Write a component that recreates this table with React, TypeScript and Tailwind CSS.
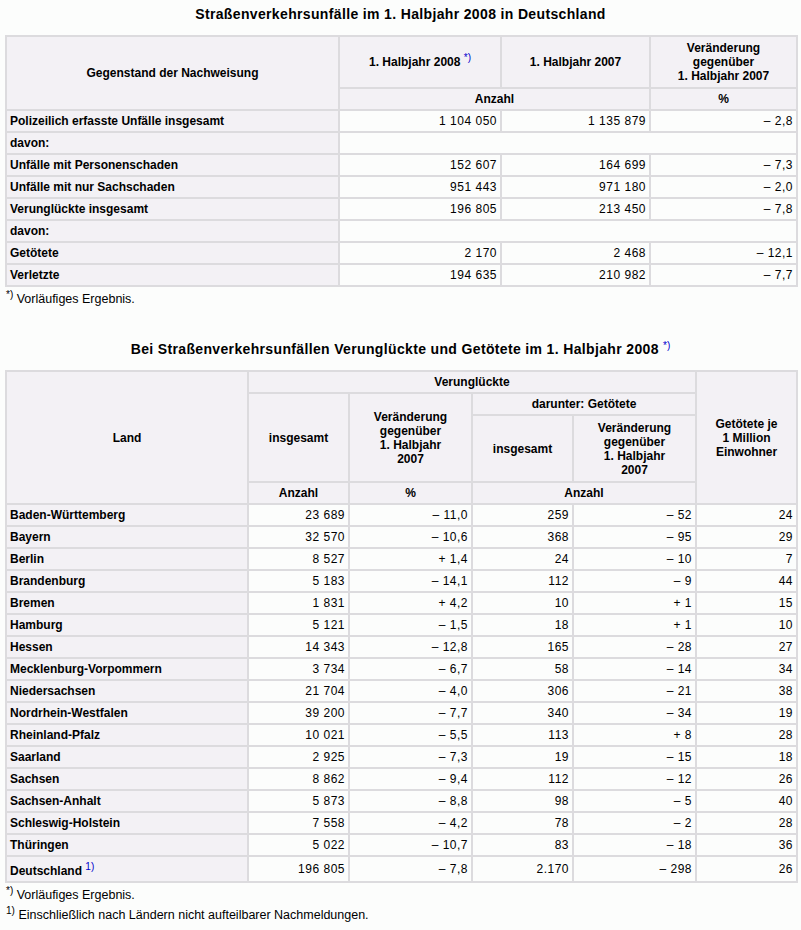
import React from "react";

const font = { fontFamily: '"Liberation Sans", Arial, sans-serif' };

const th = "border-2 border-[#dcdbde] bg-[#f3f1f5] font-bold text-center align-middle px-[3px]";
const lab = "border-2 border-[#dcdbde] bg-[#f3f1f5] font-bold text-left px-[3px] h-[22px]";
const num = "border-2 border-[#dcdbde] text-right px-[3px] h-[22px] tracking-[0.5px]";

const Sup = ({ children, blue = true }: { children: React.ReactNode; blue?: boolean }) => (
  <sup className={`text-[10px] font-normal tracking-normal ${blue ? "text-[#0000cc]" : "text-black"}`}>{children}</sup>
);

const table1: (string | null)[][] = [
  ["Polizeilich erfasste Unfälle insgesamt", "1 104 050", "1 135 879", "– 2,8"],
  ["davon:", null],
  ["Unfälle mit Personenschaden", "152 607", "164 699", "– 7,3"],
  ["Unfälle mit nur Sachschaden", "951 443", "971 180", "– 2,0"],
  ["Verunglückte insgesamt", "196 805", "213 450", "– 7,8"],
  ["davon:", null],
  ["Getötete", "2 170", "2 468", "– 12,1"],
  ["Verletzte", "194 635", "210 982", "– 7,7"],
];

const laender = [
  ["Baden-Württemberg", "23 689", "– 11,0", "259", "– 52", "24"],
  ["Bayern", "32 570", "– 10,6", "368", "– 95", "29"],
  ["Berlin", "8 527", "+ 1,4", "24", "– 10", "7"],
  ["Brandenburg", "5 183", "– 14,1", "112", "– 9", "44"],
  ["Bremen", "1 831", "+ 4,2", "10", "+ 1", "15"],
  ["Hamburg", "5 121", "– 1,5", "18", "+ 1", "10"],
  ["Hessen", "14 343", "– 12,8", "165", "– 28", "27"],
  ["Mecklenburg-Vorpommern", "3 734", "– 6,7", "58", "– 14", "34"],
  ["Niedersachsen", "21 704", "– 4,0", "306", "– 21", "38"],
  ["Nordrhein-Westfalen", "39 200", "– 7,7", "340", "– 34", "19"],
  ["Rheinland-Pfalz", "10 021", "– 5,5", "113", "+ 8", "28"],
  ["Saarland", "2 925", "– 7,3", "19", "– 15", "18"],
  ["Sachsen", "8 862", "– 9,4", "112", "– 12", "26"],
  ["Sachsen-Anhalt", "5 873", "– 8,8", "98", "– 5", "40"],
  ["Schleswig-Holstein", "7 558", "– 4,2", "78", "– 2", "28"],
  ["Thüringen", "5 022", "– 10,7", "83", "– 18", "36"],
];

export default function App() {
  return (
    <div style={font} className="bg-[#fcfdfc] min-h-[930px] w-[801px] px-[5px] pt-[6px] text-[12px] leading-[14px] text-black">
      <h1 className="text-center font-bold text-[14px] leading-[17px] tracking-[0.35px]">
        Straßenverkehrsunfälle im 1. Halbjahr 2008 in Deutschland
      </h1>
      <table className="mt-[12px] w-[791px] table-fixed border-collapse">
        <colgroup>
          <col className="w-[333px]" />
          <col className="w-[162px]" />
          <col className="w-[149px]" />
          <col className="w-[147px]" />
        </colgroup>
        <thead>
          <tr>
            <th rowSpan={2} className={th}>Gegenstand der Nachweisung</th>
            <th className={`${th} h-[52px]`}>
              1. Halbjahr 2008 <Sup>*)</Sup>
            </th>
            <th className={th}>1. Halbjahr 2007</th>
            <th className={th}>
              Veränderung
              <br />
              gegenüber
              <br />
              1. Halbjahr 2007
            </th>
          </tr>
          <tr>
            <th colSpan={2} className={`${th} h-[22px]`}>Anzahl</th>
            <th className={th}>%</th>
          </tr>
        </thead>
        <tbody>
          {table1.map((r, i) => (
            <tr key={i}>
              <td className={lab}>{r[0]}</td>
              {r[1] === null ? (
                <td colSpan={3} className={num}></td>
              ) : (
                r.slice(1).map((v, j) => (
                  <td key={j} className={num}>
                    {v}
                  </td>
                ))
              )}
            </tr>
          ))}
        </tbody>
      </table>
      <p className="mt-[5px] pl-[1px] text-[12.5px]">
        <Sup blue={false}>*)</Sup> Vorläufiges Ergebnis.
      </p>

      <h2 className="mt-[35px] text-center font-bold text-[14px] leading-[17px] tracking-[0.35px]">
        Bei Straßenverkehrsunfällen Verunglückte und Getötete im 1. Halbjahr 2008 <Sup>*)</Sup>
      </h2>
      <table className="mt-[12px] w-[791px] table-fixed border-collapse">
        <colgroup>
          <col className="w-[242px]" />
          <col className="w-[101px]" />
          <col className="w-[123px]" />
          <col className="w-[101px]" />
          <col className="w-[123px]" />
          <col className="w-[101px]" />
        </colgroup>
        <thead>
          <tr>
            <th rowSpan={4} className={th}>Land</th>
            <th colSpan={4} className={`${th} h-[22px]`}>Verunglückte</th>
            <th rowSpan={4} className={th}>
              Getötete je
              <br />
              1 Million
              <br />
              Einwohner
            </th>
          </tr>
          <tr>
            <th rowSpan={2} className={th}>insgesamt</th>
            <th rowSpan={2} className={th}>
              Veränderung
              <br />
              gegenüber
              <br />
              1. Halbjahr
              <br />
              2007
            </th>
            <th colSpan={2} className={`${th} h-[22px]`}>darunter: Getötete</th>
          </tr>
          <tr>
            <th className={`${th} h-[67px]`}>insgesamt</th>
            <th className={th}>
              Veränderung
              <br />
              gegenüber
              <br />
              1. Halbjahr
              <br />
              2007
            </th>
          </tr>
          <tr>
            <th className={`${th} h-[22px]`}>Anzahl</th>
            <th className={th}>%</th>
            <th colSpan={2} className={th}>Anzahl</th>
          </tr>
        </thead>
        <tbody>
          {laender.map((r) => (
            <tr key={r[0]}>
              <td className={lab}>{r[0]}</td>
              {r.slice(1).map((v, j) => (
                <td key={j} className={num}>
                  {v}
                </td>
              ))}
            </tr>
          ))}
          <tr>
            <td className={`${lab} h-[26px] align-bottom pb-[3px]`}>
              Deutschland <Sup>1)</Sup>
            </td>
            {["196 805", "– 7,8", "2.170", "– 298", "26"].map((v, j) => (
              <td key={j} className={`${num} h-[26px]`}>
                {v}
              </td>
            ))}
          </tr>
        </tbody>
      </table>
      <p className="mt-[5px] pl-[1px] text-[12.5px]">
        <Sup blue={false}>*)</Sup> Vorläufiges Ergebnis.
      </p>
      <p className="mt-[6px] pl-[1px] text-[12.5px]">
        <Sup blue={false}>1)</Sup> Einschließlich nach Ländern nicht aufteilbarer Nachmeldungen.
      </p>
    </div>
  );
}
